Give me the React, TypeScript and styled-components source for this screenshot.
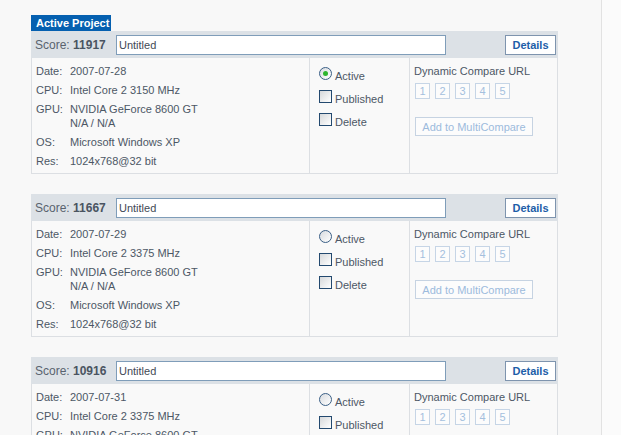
import React from "react";
import styled, { createGlobalStyle } from "styled-components";

const Global = createGlobalStyle`
  html, body { margin: 0; padding: 0; background: #f8f8f8; }
  body { font-family: "Liberation Sans", Arial, sans-serif; font-size: 11px; color: #4c5765; }
`;

const Page = styled.div`
  display: flex;
  min-height: 435px;
`;

const Main = styled.div`
  width: 602px;
  box-sizing: border-box;
  border-right: 1px solid #e2e2e2;
  padding: 15px 0 0 31px;
  overflow: hidden;
  height: 435px;
`;

const Side = styled.div`
  flex: 1;
  background: #fbfbfb;
`;

const Tab = styled.div`
  display: inline-block;
  height: 16px;
  line-height: 16px;
  width: 80px;
  box-sizing: border-box;
  padding-left: 5px;
  background: #0560b0;
  color: #fff;
  font-weight: bold;
  font-size: 11px;
  vertical-align: top;
`;

const Card = styled.div`
  width: 527px;
  margin-bottom: 20px;
`;

const Header = styled.div`
  height: 27px;
  background: #dce1e6;
  display: flex;
  align-items: center;
  padding: 0 2px 0 4px;
`;

const Score = styled.div`
  font-size: 12px;
  color: #59636f;
  width: 81px;
  white-space: nowrap;
  b { color: #4a5461; }
`;

const NameInput = styled.input`
  width: 330px;
  height: 20px;
  box-sizing: border-box;
  border: 1px solid #7f9db9;
  background: #fff;
  font-family: "Liberation Sans", Arial, sans-serif;
  font-size: 11px;
  color: #3f4955;
  padding: 0 2px;
  outline: none;
`;

const DetailsButton = styled.button`
  margin-left: auto;
  width: 51px;
  height: 20px;
  box-sizing: border-box;
  border: 1px solid #7e94ae;
  background: #fff;
  color: #1d5ea8;
  font-family: "Liberation Sans", Arial, sans-serif;
  font-weight: bold;
  font-size: 11px;
  padding: 0;
`;

const Body = styled.div`
  display: grid;
  grid-template-columns: 278px 100px 1fr;
  height: 116px;
  box-sizing: border-box;
  border: 1px solid #dcdfe3;
  border-top: none;
  background: #f9f9f9;
`;

const InfoCol = styled.div`
  padding: 6px 4px;
  display: flex;
  flex-direction: column;
  gap: 5px;
  border-right: 1px solid #dcdfe3;
`;

const InfoRow = styled.div`
  display: grid;
  grid-template-columns: 34px 1fr;
  line-height: 14px;
`;

const OptionsCol = styled.div`
  padding: 9px 0 0 9px;
  display: flex;
  flex-direction: column;
  gap: 10px;
  border-right: 1px solid #dcdfe3;
`;

const Option = styled.label`
  display: flex;
  align-items: flex-start;
  height: 13px;
  gap: 3px;
  line-height: 14px;
  span { padding-top: 2px; }
`;

const Radio = styled.span<{ $checked?: boolean }>`
  width: 13px;
  height: 13px;
  box-sizing: border-box;
  border: 1px solid #3a5f86;
  border-radius: 50%;
  background: linear-gradient(135deg, #d8dbdf, #ffffff);
  display: flex;
  align-items: center;
  justify-content: center;
  flex: none;
  padding: 0 !important;
  &::after {
    content: "";
    width: 5px;
    height: 5px;
    border-radius: 50%;
    background: ${(p) => (p.$checked ? "#2eb52e" : "transparent")};
  }
`;

const Check = styled.span`
  width: 13px;
  height: 13px;
  box-sizing: border-box;
  border: 1px solid #23496f;
  background: linear-gradient(135deg, #d6d8da, #ffffff);
  flex: none;
  padding: 0 !important;
`;

const CompareCol = styled.div`
  padding: 6px 0 0 4px;
  line-height: 14px;
`;

const NumRow = styled.div`
  display: flex;
  gap: 5px;
  margin: 5px 0 0 1px;
`;

const NumBox = styled.span`
  width: 15px;
  height: 16px;
  box-sizing: border-box;
  border: 1px solid #c6d5e6;
  background: #fcfcfc;
  color: #a4c0de;
  display: flex;
  align-items: center;
  justify-content: center;
  font-size: 11px;
`;

const MultiButton = styled.button`
  margin: 18px 0 0 1px;
  width: 118px;
  height: 19px;
  box-sizing: border-box;
  border: 1px solid #c6d3e2;
  background: #fcfcfc;
  color: #9dbbdd;
  font-family: "Liberation Sans", Arial, sans-serif;
  font-size: 11px;
  padding: 0;
`;

type Project = {
  score: number;
  date: string;
  cpu: string;
  active?: boolean;
};

const projects: Project[] = [
  { score: 11917, date: "2007-07-28", cpu: "Intel Core 2 3150 MHz", active: true },
  { score: 11667, date: "2007-07-29", cpu: "Intel Core 2 3375 MHz" },
  { score: 10916, date: "2007-07-31", cpu: "Intel Core 2 3375 MHz" },
];

function ProjectCard({ p }: { p: Project }) {
  return (
    <Card>
      <Header>
        <Score>
          Score: <b>{p.score}</b>
        </Score>
        <NameInput defaultValue="Untitled" />
        <DetailsButton>Details</DetailsButton>
      </Header>
      <Body>
        <InfoCol>
          <InfoRow><span>Date:</span><span>{p.date}</span></InfoRow>
          <InfoRow><span>CPU:</span><span>{p.cpu}</span></InfoRow>
          <InfoRow><span>GPU:</span><span>NVIDIA GeForce 8600 GT<br />N/A / N/A</span></InfoRow>
          <InfoRow><span>OS:</span><span>Microsoft Windows XP</span></InfoRow>
          <InfoRow><span>Res:</span><span>1024x768@32 bit</span></InfoRow>
        </InfoCol>
        <OptionsCol>
          <Option><Radio $checked={p.active} /><span>Active</span></Option>
          <Option><Check /><span>Published</span></Option>
          <Option><Check /><span>Delete</span></Option>
        </OptionsCol>
        <CompareCol>
          <div>Dynamic Compare URL</div>
          <NumRow>
            {[1, 2, 3, 4, 5].map((n) => (
              <NumBox key={n}>{n}</NumBox>
            ))}
          </NumRow>
          <MultiButton>Add to MultiCompare</MultiButton>
        </CompareCol>
      </Body>
    </Card>
  );
}

export default function App() {
  return (
    <Page>
      <Global />
      <Main>
        <Tab>Active Project</Tab>
        {projects.map((p) => (
          <ProjectCard key={p.score} p={p} />
        ))}
      </Main>
      <Side />
    </Page>
  );
}
